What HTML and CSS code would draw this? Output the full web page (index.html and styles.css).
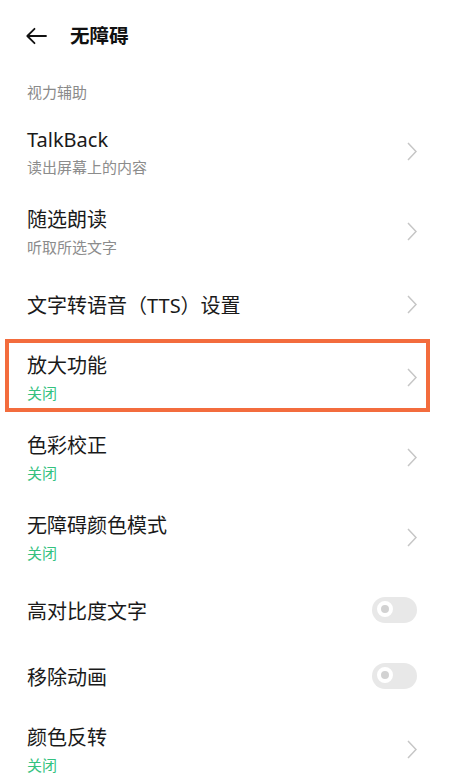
FILE: index.html
```html
<!DOCTYPE html>
<html lang="zh-CN">
<head>
<meta charset="utf-8">
<title>无障碍</title>
<link rel="stylesheet" href="styles.css">
</head>
<body>
<div class="page">
  <header class="topbar">
    <svg class="back" width="22" height="18" viewBox="0 0 22 18"><path d="M21 9H2.5M9.5 1.8L2.3 9l7.2 7.2" fill="none" stroke="#111" stroke-width="1.8" stroke-linecap="round" stroke-linejoin="round"/></svg>
    <h1 class="title">无障碍</h1>
  </header>
  <div class="section">视力辅助</div>
  <ul class="list">
    <li class="row two">
      <div class="text"><div class="name">TalkBack</div><div class="sub">读出屏幕上的内容</div></div>
      <span class="chev"><svg width="10" height="19" viewBox="0 0 10 19"><path d="M1 1l8 8.5L1 18" fill="none" stroke="#c6c6c6" stroke-width="1.5"/></svg></span>
    </li>
    <li class="row two">
      <div class="text"><div class="name">随选朗读</div><div class="sub">听取所选文字</div></div>
      <span class="chev"><svg width="10" height="19" viewBox="0 0 10 19"><path d="M1 1l8 8.5L1 18" fill="none" stroke="#c6c6c6" stroke-width="1.5"/></svg></span>
    </li>
    <li class="row one">
      <div class="text"><div class="name">文字转语音（TTS）设置</div></div>
      <span class="chev"><svg width="10" height="19" viewBox="0 0 10 19"><path d="M1 1l8 8.5L1 18" fill="none" stroke="#c6c6c6" stroke-width="1.5"/></svg></span>
    </li>
    <li class="row two highlighted">
      <div class="text"><div class="name">放大功能</div><div class="sub on">关闭</div></div>
      <span class="chev"><svg width="10" height="19" viewBox="0 0 10 19"><path d="M1 1l8 8.5L1 18" fill="none" stroke="#c6c6c6" stroke-width="1.5"/></svg></span>
      <span class="mark"></span>
    </li>
    <li class="row two">
      <div class="text"><div class="name">色彩校正</div><div class="sub on">关闭</div></div>
      <span class="chev"><svg width="10" height="19" viewBox="0 0 10 19"><path d="M1 1l8 8.5L1 18" fill="none" stroke="#c6c6c6" stroke-width="1.5"/></svg></span>
    </li>
    <li class="row two">
      <div class="text"><div class="name">无障碍颜色模式</div><div class="sub on">关闭</div></div>
      <span class="chev"><svg width="10" height="19" viewBox="0 0 10 19"><path d="M1 1l8 8.5L1 18" fill="none" stroke="#c6c6c6" stroke-width="1.5"/></svg></span>
    </li>
    <li class="row one">
      <div class="text"><div class="name">高对比度文字</div></div>
      <span class="toggle"><span class="knob"></span></span>
    </li>
    <li class="row one">
      <div class="text"><div class="name">移除动画</div></div>
      <span class="toggle"><span class="knob"></span></span>
    </li>
    <li class="row two">
      <div class="text"><div class="name">颜色反转</div><div class="sub on">关闭</div></div>
      <span class="chev"><svg width="10" height="19" viewBox="0 0 10 19"><path d="M1 1l8 8.5L1 18" fill="none" stroke="#c6c6c6" stroke-width="1.5"/></svg></span>
    </li>
  </ul>
</div>
</body>
</html>
```
FILE: styles.css
```css
html, body {
  margin: 0;
  padding: 0;
  background: #ffffff;
}
body {
  font-family: "Noto Sans", "Noto Sans CJK SC", sans-serif;
  color: #1a1a1a;
  overflow: hidden;
}
.page {
  width: 450px;
}
.topbar {
  height: 72px;
  display: flex;
  align-items: center;
  padding-left: 25px;
}
.back {
  display: block;
  margin-right: 23px;
}
.title {
  margin: 0;
  font-size: 19.5px;
  font-weight: 600;
  line-height: 28px;
  color: #111;
}
.section {
  padding: 10px 0 9px 27px;
  font-size: 15px;
  line-height: 20px;
  color: #8a8a8a;
}
.list {
  list-style: none;
  margin: 0;
  padding: 0;
}
.row {
  position: relative;
  display: flex;
  align-items: center;
  justify-content: space-between;
  padding: 0 33px 0 27px;
}
.row.two { height: 80px; }
.row.one { height: 66px; }
.text {
  padding-top: 4px;
}
.name {
  font-size: 20px;
  line-height: 28px;
  color: #1a1a1a;
}
.sub {
  font-size: 15px;
  line-height: 26px;
  color: #8c8c8c;
}
.sub.on {
  color: #34c27f;
}
.chev {
  display: flex;
  align-items: center;
}
.toggle {
  position: relative;
  width: 45px;
  height: 26px;
  border-radius: 13px;
  background: #e8e8e8;
}
.knob {
  position: absolute;
  left: 5px;
  top: 4px;
  width: 8px;
  height: 8px;
  border: 4px solid #ffffff;
  border-radius: 50%;
  background: #d2d2d2;
}
.mark {
  position: absolute;
  left: 5px;
  top: 2px;
  width: 425px;
  height: 73px;
  border: 4px solid #f36c3d;
  box-sizing: border-box;
  pointer-events: none;
}
```
